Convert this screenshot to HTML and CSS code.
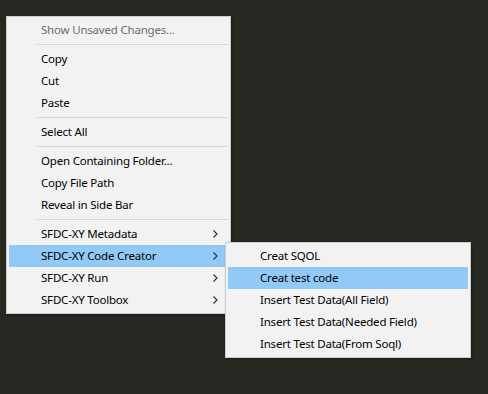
FILE: index.html
```html
<!DOCTYPE html>
<html lang="en">

<head>
    <meta charset="UTF-8" />
    <meta name="viewport" content="width=device-width, initial-scale=1.0" />
    <title>Context Menu</title>
    <link rel="stylesheet" href="styles.css">
</head>

<body>
    <!-- Main context menu -->
    <div class="menu main-menu">
        <div class="item disabled">Show Unsaved Changes...</div>
        <div class="sep"></div>
        <div class="item">Copy</div>
        <div class="item">Cut</div>
        <div class="item">Paste</div>
        <div class="sep"></div>
        <div class="item">Select All</div>
        <div class="sep"></div>
        <div class="item">Open Containing Folder...</div>
        <div class="item">Copy File Path</div>
        <div class="item">Reveal in Side Bar</div>
        <div class="sep"></div>
        <div class="item has-sub">SFDC-XY Metadata
            <svg class="arrow" width="5" height="8" viewBox="0 0 5 8"><path d="M0.5 0.5 L4 4 L0.5 7.5" /></svg>
        </div>
        <div class="item has-sub active">SFDC-XY Code Creator
            <svg class="arrow" width="5" height="8" viewBox="0 0 5 8"><path d="M0.5 0.5 L4 4 L0.5 7.5" /></svg>

            <!-- Submenu -->
            <div class="menu sub-menu">
                <div class="item">Creat SQOL</div>
                <div class="item active">Creat test code</div>
                <div class="item">Insert Test Data(All Field)</div>
                <div class="item">Insert Test Data(Needed Field)</div>
                <div class="item">Insert Test Data(From Soql)</div>
            </div>
        </div>
        <div class="item has-sub">SFDC-XY Run
            <svg class="arrow" width="5" height="8" viewBox="0 0 5 8"><path d="M0.5 0.5 L4 4 L0.5 7.5" /></svg>
        </div>
        <div class="item has-sub">SFDC-XY Toolbox
            <svg class="arrow" width="5" height="8" viewBox="0 0 5 8"><path d="M0.5 0.5 L4 4 L0.5 7.5" /></svg>
        </div>
    </div>
</body>

</html>
```

FILE: styles.css
```css
* {
    box-sizing: border-box;
}

body {
    margin: 0;
    padding: 16px 0 0 6px;
    background-color: #272822;
    font-family: 'Noto Sans', 'Open Sans', sans-serif;
    font-size: 11.5px;
    letter-spacing: -0.2px;
    color: #000;
    min-height: 100vh;
}

.menu {
    background-color: #f2f2f2;
    border: 1px solid #cccccc;
    padding: 2px;
    box-shadow: 1px 1px 2px rgba(0, 0, 0, 0.35);
}

.main-menu {
    width: 225px;
}

.sub-menu {
    position: absolute;
    left: 216px;
    top: -3px;
    width: 246px;
    z-index: 10;
}

.item {
    position: relative;
    height: 22px;
    line-height: 22px;
    padding-left: 32px;
    white-space: nowrap;
    display: flex;
    align-items: center;
}

.item.disabled {
    color: #6d6d6d;
}

.item.active {
    background-color: #91c9f7;
}

.sep {
    height: 7px;
    margin-left: 28px;
    position: relative;
}

.sep::after {
    content: "";
    position: absolute;
    left: 0;
    right: 0;
    top: 3px;
    height: 1px;
    background-color: #d7d7d7;
}

.arrow {
    position: absolute;
    right: 10px;
    top: 7px;
}

.arrow path {
    fill: none;
    stroke: #333;
    stroke-width: 1.2;
}
```
